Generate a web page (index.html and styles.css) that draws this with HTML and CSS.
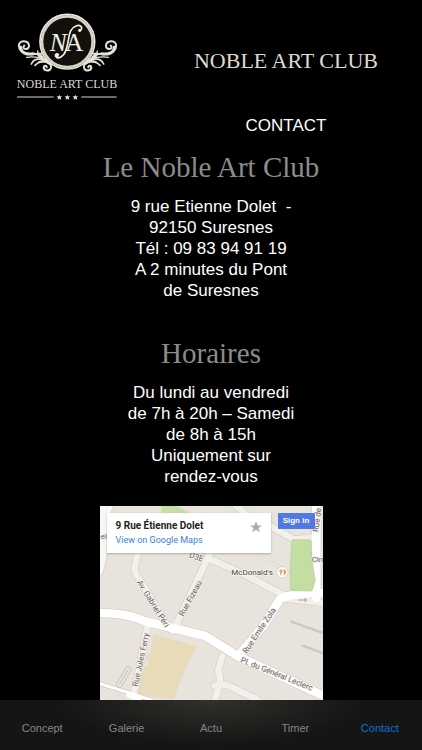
FILE: index.html
```html
<!DOCTYPE html>
<html lang="fr">
<head>
<meta charset="utf-8">
<meta name="viewport" content="width=device-width, initial-scale=1">
<title>Noble Art Club - Contact</title>
<link rel="stylesheet" href="styles.css">
</head>
<body>
<header class="header">
  <svg class="logo" viewBox="0 0 345 300" role="img" aria-label="Noble Art Club">
    <defs>
      <g id="scroll" fill="none" stroke="#e5e2d7" stroke-linecap="round">
        <path d="M94 146C70 146 62 151 46 145C22 136 20 108 42 109C60 110 62 132 47 132C40 132 38 125 43 122" stroke-width="6"/>
        <path d="M32 127C34 146 53 149 70 146" stroke-width="9"/>
        <path d="M50 148Q74 142 98 154M50 157Q75 153 101 162" stroke-width="4"/>
        <path d="M64 177C72 160 88 160 105 166M75 181C87 168 98 167 112 170" stroke-width="5"/>
        <path d="M88 171C110 165 125 175 123 188C120 200 101 199 101 187C102 180 111 181 110 187" stroke-width="6"/>
        <path d="M86 148Q96 163 118 174" stroke-width="10"/>
        <path d="M83 138Q83 151 96 160" stroke-width="4"/>
      </g>
    </defs>
    <use href="#scroll"/>
    <use href="#scroll" transform="translate(345 0) scale(-1 1)"/>
    <circle cx="172" cy="110" r="82" fill="#11100c" stroke="#eeeae0" stroke-width="5"/>
    <circle cx="172" cy="110" r="76" fill="#11100c" stroke="#d6d2c5" stroke-width="8"/>
    <g class="serif" font-size="76" fill="#f3f0e6">
      <text x="119" y="137" font-style="italic">N</text>
      <text x="165" y="137">A</text>
    </g>
    <path d="M209 77C222 70 212 57 198 63C172 73 180 103 168 135C162 155 143 164 137 154C134 147 141 145 145 149" fill="none" stroke="#f3f0e6" stroke-width="5" stroke-linecap="round"/>
    <circle cx="209" cy="76" r="5" fill="#f3f0e6"/>
    <circle cx="141" cy="152" r="5" fill="#f3f0e6"/>
    <text class="serif" x="171" y="249" font-size="36" text-anchor="middle" fill="#dedbd3">NOBLE ART CLUB</text>
    <path d="M21 276H131M214 276H320" stroke="#d8d5cd" stroke-width="3"/>
    <g fill="#e5e2da">
      <path id="star" d="M148 269l2 5h6l-4 4 2 6-6-3-6 3 2-6-4-4h6z"/>
      <use href="#star" x="24"/>
      <use href="#star" x="48"/>
    </g>
  </svg>
  <h1 class="brand">NOBLE ART CLUB</h1>
</header>
<main class="content">
  <p class="page-title">CONTACT</p>
  <section class="block">
    <h2>Le Noble Art Club</h2>
    <p>9 rue Etienne Dolet&nbsp; -<br>92150 Suresnes<br>Tél : 09 83 94 91 19<br>A 2 minutes du Pont<br>de Suresnes</p>
  </section>
  <section class="block">
    <h2>Horaires</h2>
    <p>Du lundi au vendredi<br>de 7h à 20h – Samedi<br>de 8h à 15h<br>Uniquement sur<br>rendez-vous</p>
  </section>
  <div class="map">
    <svg class="map-art" viewBox="6 9 669 582" role="img" aria-label="Plan du quartier">
      <rect x="0" y="0" width="680" height="600" fill="#e8e4dd"/>
      <path d="M0 0H50L28 60V150Q22 205 0 240Z" fill="#f8f7f4" stroke="#c9c5be" stroke-width="2"/>
      <path d="M190 9H235L300 40H190Z" fill="#c7dfa4"/>
      <path d="M165 394L299 430Q255 500 228 591L114 572L138 490L150 488V474L144 472L150 452L158 450Z" fill="#e7dbba"/>
      <g fill="none" stroke="#cbc7c0" stroke-linejoin="round" stroke-linecap="round">
        <path d="M122 140L110 195Q108 208 122 225L212 375M345 130L320 185L225 385M160 120L190 60M330 165L440 215L555 275M405 0L440 30M519 70L590 110L650 102M550 285L675 300M148 375L105 585M373 460L360 505Q375 530 350 590M350 548L385 545L480 591" stroke-width="23"/>
        <path d="M0 330Q90 330 140 355L320 398L420 460L680 580M420 460L495 370L545 290Q565 270 680 270M655 0V285" stroke-width="29"/>
        <path d="M0 540L160 591" stroke-width="13"/>
        <path d="M470 152L573 205" stroke-width="7"/>
      </g>
      <g fill="none" stroke="#f3f0eb" stroke-linejoin="round" stroke-linecap="round">
        <path d="M122 140L110 195Q108 208 122 225L212 375M345 130L320 185L225 385M160 120L190 60M330 165L440 215L555 275M405 0L440 30M519 70L590 110L650 102M550 285L675 300M148 375L105 585M373 460L360 505Q375 530 350 590M350 548L385 545L480 591" stroke-width="20"/>
        <path d="M470 152L573 205" stroke-width="4"/>
      </g>
      <g fill="none" stroke="#fff" stroke-linejoin="round" stroke-linecap="round">
        <path d="M0 330Q90 330 140 355L320 398L420 460L680 580M420 460L495 370L545 290Q565 270 680 270M655 0V285" stroke-width="26"/>
        <path d="M0 540L160 591" stroke-width="9"/>
        <path d="M94 576L124 584" stroke-width="18"/>
      </g>
      <path d="M583 110H637Q640 180 652 230L642 264L579 263Q574 190 583 110Z" fill="#c4dda0" stroke="#b5c99a" stroke-width="2"/>
      <path d="M64 545L91 499" fill="none" stroke="#c6c2bb" stroke-width="20" stroke-linecap="round"/>
      <path d="M64 545L91 499" fill="none" stroke="#e8e4dd" stroke-width="15" stroke-linecap="round"/>
      <path d="M64 545L91 499" stroke="#c6c2bb" stroke-width="3"/>
      <path d="M580 356L680 392M614 428L680 453" stroke="#cbc7c1" stroke-width="7" stroke-linecap="round"/>
      <path d="M600 291H627M619 286L627 291L619 296" fill="none" stroke="#aaa59e" stroke-width="3"/>
      <g class="map-label">
        <text x="8" y="108">el</text>
        <text transform="translate(272 163) rotate(18)" font-size="24">D3E</text>
        <text transform="translate(116 238) rotate(58)">Av. Gabriel Péri</text>
        <text transform="translate(256 341) rotate(-61)">Rue Fizeau</text>
        <text transform="translate(119 552) rotate(-78)">Rue Jules Ferry</text>
        <text transform="translate(446 453) rotate(-56)">Rue Emile Zola</text>
        <text transform="translate(426 477) rotate(22)">Pl. du Général Leclerc</text>
        <text transform="translate(661 88) rotate(-83)">Rue de</text>
        <text x="641" y="178">Cin</text>
        <text class="poi" x="400" y="215">McDonald's</text>
      </g>
      <circle cx="553" cy="208" r="17" fill="#fff" stroke="#c7c2bb" stroke-width="2"/>
      <path d="M546 200V206Q549 212 552 206V200M549 200V217M559 217V200Q565 204 562 211H559" fill="none" stroke="#e88b24" stroke-width="3"/>
    </svg>
    <div class="place-card">
      <div>
        <strong>9 Rue Étienne Dolet</strong>
        <a href="#maps">View on Google Maps</a>
      </div>
      <button class="star-button" aria-label="Enregistrer">
        <svg viewBox="0 0 24 24"><path d="M12 0l3 9h9l-7 5 3 9-8-6-8 6 3-9-7-5h9z" fill="#aaa"/></svg>
      </button>
    </div>
    <button class="sign-in">Sign in</button>
  </div>
</main>
<nav class="tabs">
  <a href="#concept">Concept</a>
  <a href="#galerie">Galerie</a>
  <a href="#actu">Actu</a>
  <a href="#timer">Timer</a>
  <a href="#contact" class="active" aria-current="page">Contact</a>
</nav>
</body>
</html>
```
FILE: styles.css
```css
* { box-sizing: border-box; }

body {
  margin: 0;
  min-height: 100vh;
  display: flex;
  flex-direction: column;
  background: #000;
  color: #fff;
  font-family: "Liberation Sans", Arial, sans-serif;
  font-size: 17px;
  line-height: 21px;
}

h1, h2, p { margin: 0; font-weight: 400; }

button { border: 0; padding: 0; font-family: inherit; }

a { text-decoration: none; }

.serif, .brand, h2 { font-family: "Liberation Serif", "Times New Roman", serif; }

.header {
  display: grid;
  grid-template-columns: 150px 1fr;
  align-items: center;
  padding-top: 5px;
}

.logo { display: block; width: 115px; height: 100px; margin-left: 10px; }

.brand {
  margin-top: 12px;
  text-align: center;
  font-size: 22px;
  line-height: 24px;
  color: #dedad0;
}

.content { flex: 1; text-align: center; padding-top: 10px; }

.page-title { padding-left: 150px; }

.block { padding-top: 14px; }

.block + .block { padding-top: 35px; }

h2 {
  margin-bottom: 12px;
  font-size: 29px;
  line-height: 34px;
  color: #8c8c8c;
}

.map {
  position: relative;
  width: 223px;
  margin: 19px auto 0;
  overflow: hidden;
  text-align: left;
}

.map-art { display: block; width: 100%; }

.map-label {
  font-family: Roboto, sans-serif;
  font-size: 24px;
  fill: #66615d;
  stroke: #f6f4f0;
  stroke-width: 4px;
  paint-order: stroke;
}

.poi { fill: #4b4643; }

.place-card {
  position: absolute;
  top: 7px;
  left: 7px;
  width: 164px;
  height: 40px;
  padding: 6px 9px;
  display: flex;
  justify-content: space-between;
  background: #fff;
  box-shadow: 0 1px 2px rgba(0, 0, 0, .25);
  color: #222;
  font-family: Roboto, sans-serif;
  font-size: 9px;
  line-height: 14px;
}

.place-card strong, .place-card a { display: block; white-space: nowrap; }

.place-card strong { font-size: 10px; font-weight: 700; }

.place-card a { color: #3b7de0; }

.star-button { width: 12px; height: 16px; background: none; }

.star-button svg { display: block; width: 12px; height: 12px; }

.sign-in {
  position: absolute;
  top: 7px;
  right: 8px;
  width: 37px;
  height: 16px;
  border-radius: 1px;
  background: #5079e4;
  color: #fff;
  font-size: 8px;
  font-weight: 700;
  line-height: 16px;
}

.tabs {
  position: sticky;
  bottom: 0;
  display: grid;
  grid-template-columns: repeat(5, 1fr);
  background: radial-gradient(ellipse 36% 90% at 50% 0, #32302b, #151515);
}

.tabs a {
  height: 50px;
  padding: 18px 0;
  text-align: center;
  font-size: 11px;
  line-height: 20px;
  color: #858585;
}

.tabs .active { color: #126fce; }
```
